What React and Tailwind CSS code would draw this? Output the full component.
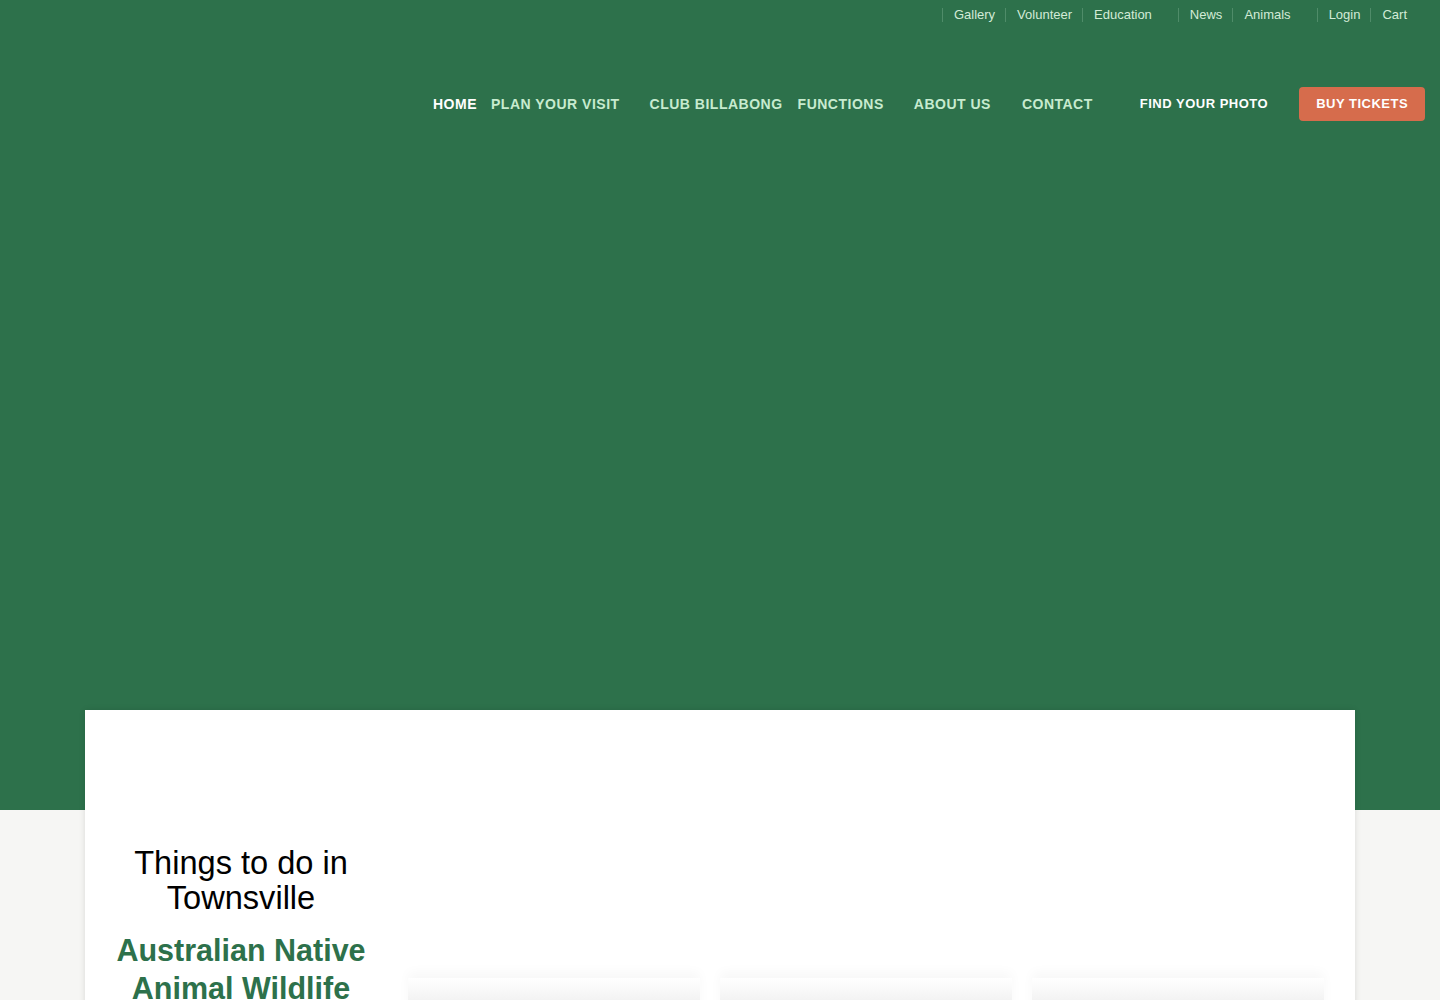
export default function App() {
  const top1 = ["Gallery", "Volunteer", "Education"];
  const top2 = ["News", "Animals"];
  const top3 = ["Login", "Cart"];
  const Group = ({ items, cls }) => (
    <div className={"flex items-center " + cls}>
      {items.map((t) => (
        <div key={t} className="flex items-center">
          <span className="w-px h-[14px] bg-[#4f8c69]" />
          <span className="ml-[11px] mr-[10px]">{t}</span>
        </div>
      ))}
    </div>
  );
  const Card = () => (
    <div className="w-[292px] h-[60px] bg-[#f3f3f3] rounded-t-[3px] shadow-[0_-6px_12px_rgba(0,0,0,0.03)] flex flex-col">
      <div className="h-[22px] bg-gradient-to-b from-white to-[#f3f3f3]" />
    </div>
  );
  return (
    <div className="min-h-[1000px] h-[1000px] bg-[#f6f6f4] overflow-hidden" style={{ fontFamily: '"Liberation Sans", Arial, sans-serif' }}>
      <div className="bg-[#2d714b] h-[810px]">
        <div className="flex justify-end h-[29px] items-center text-[13px] text-[#d3ebd7] pr-[23px] pt-[1px]">
          <Group items={top1} cls="" />
          <Group items={top2} cls="ml-[16px]" />
          <Group items={top3} cls="ml-[16px]" />
        </div>
        <div className="flex items-center mt-[58px] text-[14px] font-bold text-[#c7ebcf] tracking-[0.5px]">
          <span className="ml-[433px] text-white">HOME</span>
          <span className="ml-[14px]">PLAN YOUR VISIT</span>
          <span className="ml-[30px]">CLUB BILLABONG</span>
          <span className="ml-[15px]">FUNCTIONS</span>
          <span className="ml-[30px]">ABOUT US</span>
          <span className="ml-[31px]">CONTACT</span>
          <span className="ml-[47px] text-[13px] text-white">FIND YOUR PHOTO</span>
          <span className="ml-[31px] w-[126px] h-[34px] rounded-[4px] bg-[#d66c4c] text-white text-[13px] flex items-center justify-center">BUY TICKETS</span>
        </div>
      </div>
      <div className="mx-[85px] -mt-[100px] bg-white shadow-[0_0_6px_rgba(0,0,0,0.12)] h-[400px] flex px-[20px]">
        <div className="w-[272px] pt-[135px] text-center">
          <h2 className="text-[32.6px] leading-[35px] text-black">Things to do in Townsville</h2>
          <h3 className="mt-[16px] text-[30.5px] leading-[38px] font-bold text-[#2d714b]">Australian Native Animal Wildlife</h3>
        </div>
        <div className="ml-[31px] pt-[268px] flex gap-[20px]">
          <Card />
          <Card />
          <Card />
        </div>
      </div>
    </div>
  );
}
